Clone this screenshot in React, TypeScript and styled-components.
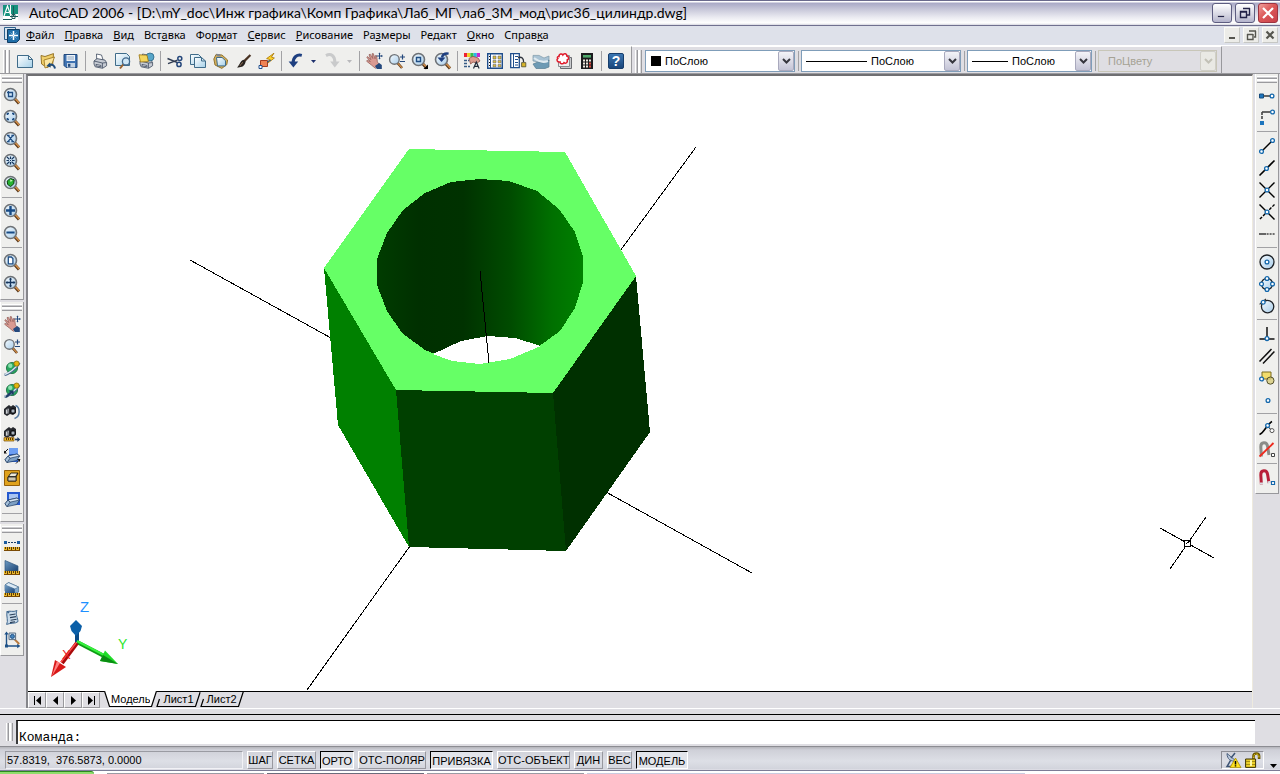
import React from "react";
import styled, { createGlobalStyle, css } from "styled-components";

const GlobalStyle = createGlobalStyle`
  * { box-sizing: border-box; }
  html, body { margin: 0; padding: 0; }
  body { font-family: "Liberation Sans", Arial, sans-serif; font-size: 11px; color: #000; background: #dfdee3; }
  button, select, input { font: inherit; color: inherit; margin: 0; padding: 0; border: 0; background: none; border-radius: 0; }
  svg { display: block; flex: none; }
`;

/* ---------- icons ---------- */

const Ruler = () => (
  <g>
    <path d="M0 11h16v4H0z" fill="#e9b82a" />
    <path d="M0 14.5h16" stroke="#7a4a05" />
    <path d="M1.5 11v2M3.5 11v3M5.5 11v2M7.5 11v3M9.5 11v2M11.5 11v3M13.5 11v2M15.5 11v3" stroke="#5c3a08" />
  </g>
);

const Lens = ({ children }: { children?: React.ReactNode }) => (
  <g>
    <path d="M10.5 10.5L15 15.5" stroke="#5b3a1c" strokeWidth="3" />
    <path d="M11 10.6L15.2 15" stroke="#d8924a" strokeWidth="1.4" />
    <circle cx="6.5" cy="6.5" r="6" fill="url(#glass)" stroke="#6e7276" strokeWidth="1.6" />
    {children}
  </g>
);

const Node = ({ x, y }: { x: number; y: number }) => (
  <circle cx={x} cy={y} r="1.9" fill="#fff" stroke="#1468ac" strokeWidth="1.3" />
);

const Hand = () => (
  <g>
    <path d="M.8 4.2l1-.6 3 3L3 1.7l1.2-.5 2.6 4.3L6 .8l1.3-.2 1.8 5.2.3-3.3 1.2.2.8 6.2 2 2.8-4 3.6-4-3.3L.6 8.2l.7-1 3 1.5z" fill="#d99a92" stroke="#8d5650" strokeWidth=".7" />
    <path d="M9 13l4.2-3 2.6 2v4h-5z" fill="#24487c" />
    <path d="M13.5 0v6M10.5 3h6" stroke="#24487c" />
    <path d="M13.5-.6l1.2 1.4h-2.4zM13.5 6.6l1.2-1.4h-2.4zM16.6 3l-1.4-1.2v2.4z" fill="#24487c" />
  </g>
);

const Printer = () => (
  <g stroke="#3e4a5e" strokeWidth=".8">
    <path d="M4.5 1l5 1 1.6 5-6.4-.6z" fill="#fff" />
    <path d="M2 8l3-2.4 8 1.5 1.6 2.6v3l-4 2.6-7.4-1.5L2 11z" fill="#c6cbd3" />
    <path d="M2 8l8.4 2 4-.4M10.4 10v5" fill="none" />
    <path d="M4 11.4l5 1.1v1.3l-5-1z" fill="#fff" />
  </g>
);

const Planet = () => (
  <g>
    <circle cx="8" cy="8" r="5.6" fill="#27a65e" stroke="#156a3d" strokeWidth=".8" />
    <circle cx="6.3" cy="5.8" r="2.2" fill="#8be0ad" />
    <path d="M.6 14.8C3 14.6 12.6 8.8 15.2 2.8" fill="none" stroke="#486a8c" strokeWidth="2.6" />
    <path d="M.9 14.4C4 13.6 12 8.8 14.8 3" fill="none" stroke="#dfeaf4" strokeWidth="1.2" />
    <circle cx="12.6" cy="3.6" r="2.6" fill="#e2b50e" stroke="#8d6c05" strokeWidth=".8" />
  </g>
);

const Camera = () => (
  <g>
    <path d="M0 5l3-2.6L5 1l2 1.6L9 1l3 2v6l-3 2-3-1-3 2-3-2z" fill="#25282d" />
    <circle cx="9" cy="7" r="2.6" fill="#5d646e" stroke="#0c0d0f" />
    <path d="M2.4 5.6v4.2M4.2 4.6l-.4 5" stroke="#d5d9de" strokeWidth="1.1" />
    <circle cx="9" cy="7" r="1" fill="#c3ccd6" />
  </g>
);

const Solid = () => (
  <g stroke="#1c3a5e" strokeWidth=".7">
    <path d="M4 8l9-2 2.6 2-3 4.6-9.6 2L1 11.8z" fill="#7da0c4" />
    <path d="M4 8l9-2 2.6 2-9.6 2.2z" fill="#d7e5f2" />
    <path d="M6 10.2l-3 4.4L1 11.8 4 8z" fill="#a7c1da" />
  </g>
);

const Magnet = ({ fill }: { fill: string }) => (
  <path d="M2.4 14.5L1.8 5C1.6-.4 7.8-.6 8.6 4.4L10 13" fill="none" stroke={fill} strokeWidth="3" />
);

const icons: Record<string, React.ReactNode> = {
  "new": <path d="M.5 2.5h11l4 4v8H.5zM11.5 2.5v4h4" fill="url(#sheet)" stroke="#3f6c8a" />,
  open: (
    <g>
      <path d="M1 2.5l4 1L13.5.6l-.8 11L7 14.6 1.6 11z" fill="#f0cf6a" stroke="#8c6a1c" strokeWidth=".9" />
      <path d="M4 7l10.5-3-3 8L5 15z" fill="#fbe6a2" stroke="#a07a22" strokeWidth=".9" />
      <path d="M15 15.5c-.5-3.5-3-4.6-6-3.6" fill="none" stroke="#1f4c7c" strokeWidth="2" />
      <path d="M6.4 13l3.6-3.6.8 5z" fill="#1f4c7c" />
    </g>
  ),
  save: (
    <g>
      <path d="M1 1.5h13v13H3l-2-2z" fill="#3f73b2" stroke="#234a7c" />
      <path d="M3.5 2h8.5v6H3.5z" fill="#eef3f8" />
      <path d="M4.5 4h6.5M4.5 6h6.5" stroke="#8ca6c2" />
      <path d="M4 10h8v4.5H4z" fill="#c3d3e4" />
      <path d="M5 10.8h2.4v3H5z" fill="#234a7c" />
    </g>
  ),
  print: <Printer />,
  preview: (
    <g>
      <path d="M.5.5h11l3 3v9H.5z" fill="url(#sheet)" stroke="#3f6c8a" />
      <path d="M8.5 11L5 15.5" stroke="#9a6230" strokeWidth="2" />
      <circle cx="11" cy="8.4" r="3.6" fill="#cfe6f5" stroke="#41688c" strokeWidth="1.3" />
    </g>
  ),
  publish: (
    <g>
      <Printer />
      <circle cx="12" cy="4" r="4" fill="#57a5c8" stroke="#2c6684" strokeWidth=".8" />
      <path d="M1 1.8l8 .4 1.4 6.4-8 .4z" fill="#f4d65c" stroke="#987312" strokeWidth=".8" />
    </g>
  ),
  cut: (
    <g fill="none">
      <path d="M.5 5.5L10.5 9.6M1 10.6l9.5-3.4" stroke="#2f3b52" strokeWidth="1.4" />
      <circle cx="12.8" cy="5.6" r="2" stroke="#24467a" strokeWidth="1.5" />
      <circle cx="12" cy="11.4" r="2.1" stroke="#24467a" strokeWidth="1.5" />
    </g>
  ),
  copy: (
    <g fill="url(#sheet)" stroke="#3f6c8a">
      <path d="M.5 1.5h8l3 3v7H.5z" />
      <path d="M4.5 4.5h7l4 3.5v6.5h-11z" />
      <path d="M11.5 4.5V8h4" fill="none" />
    </g>
  ),
  paste: (
    <g>
      <path d="M3 1.5L9 2l5.6 5-.8 4.6-5 3.8L2 12 .8 6z" fill="#d5b05c" stroke="#8a6b24" strokeWidth=".9" />
      <path d="M3.2.8l4 .4.6 2.2-4-.2z" fill="#80868e" />
      <path d="M3.5 4.5h5.6l3.4 3.2v5.2H4.5z" fill="url(#sheet)" stroke="#3f6c8a" />
    </g>
  ),
  match: (
    <g>
      <path d="M14.4 2L8 8.4" stroke="#493222" strokeWidth="2.2" />
      <path d="M9.6 8.6L7.6 6.8C4 8 4 12 1 14.4c3.6.4 8-.6 8.6-5.8z" fill="#27221f" />
      <path d="M7 9.4c-1.5.8-2 2-3 3.4" stroke="#98765a" fill="none" />
    </g>
  ),
  blockedit: (
    <g>
      <path d="M15 .2L7.6 5.6l3 .8-2.4 4.2L15.4 5l-3-.8z" fill="#ffd428" stroke="#a87400" strokeWidth=".8" />
      <path d="M1.5 7.5h7v6h-7z" fill="#ef8354" stroke="#a33b1e" />
      <path d="M0 12.5h3v3H0z" fill="#fff" stroke="#204f8e" />
      <path d="M8 9l4-2" stroke="#204f8e" />
    </g>
  ),
  undo: (
    <g>
      <path d="M13.8 2.4C9 1.2 5 4 5.2 10" fill="none" stroke="#1e3f80" strokeWidth="3" />
      <path d="M.6 8.6h9.6L5.4 14.6z" fill="#1e3f80" />
    </g>
  ),
  redo: (
    <g>
      <path d="M2 2.6C7-.2 11 3 10.8 9.4" fill="none" stroke="#c9cacb" strokeWidth="3" />
      <path d="M6.2 8.6h9.4l-4.8 6z" fill="#c9cacb" />
    </g>
  ),
  pan: <Hand />,
  realtime: (
    <g>
      <path d="M8.6 10L13 15" stroke="#5b3a1c" strokeWidth="2.6" />
      <path d="M9 10.4l4 4.4" stroke="#d8924a" strokeWidth="1.2" />
      <circle cx="5.4" cy="6.4" r="4.8" fill="url(#glass)" stroke="#6e7276" strokeWidth="1.4" />
      <path d="M13.5 1.5v5M11 4h5M11 8.5h5" stroke="#24487c" strokeWidth="1.2" />
    </g>
  ),
  zoomwin: (
    <Lens>
      <path d="M4.5 4.5h4v4h-4zM3 4.5h6M4.5 3v6" fill="none" stroke="#1f4e84" strokeWidth="1.3" />
    </Lens>
  ),
  zoomflyout: (
    <g>
      <Lens>
        <path d="M4.5 4.5h4v4h-4z" fill="none" stroke="#1f4e84" strokeWidth="1.4" />
      </Lens>
      <path d="M16 11.5V16h-4.5z" fill="#000" />
    </g>
  ),
  zoomprev: (
    <Lens>
      <path d="M13.6.6c-4-.6-6 1-6.6 4" fill="none" stroke="#1e3f80" strokeWidth="2.4" />
      <path d="M2.4 4.4h8L6.6 9z" fill="#1e3f80" />
    </Lens>
  ),
  props: (
    <g>
      <path d="M0 0h3.2v4H0z" fill="#e23" />
      <path d="M3.2 0h3.2v4H3.2z" fill="#f0d020" />
      <path d="M6.4 0h3.2v4H6.4z" fill="#35c04a" />
      <path d="M9.6 0h3.2v4H9.6z" fill="#2ab8e8" />
      <path d="M12.8 0H16v4h-3.2z" fill="#c52bd0" />
      <path d="M5 5.4l4-2 5 1.6 2 3-3 2-4-1-2.4 2z" fill="#dd9d90" stroke="#8d4f44" strokeWidth=".8" />
      <path d="M0 7.5h5M0 10.5h4M0 13.5h6" stroke="#375c86" strokeWidth="1.4" strokeDasharray="3 1" />
      <path d="M9.5 15.5l2.8-6.4 2.8 6.4M10.6 13.4h3.4" fill="none" stroke="#222b3a" strokeWidth="1.2" />
    </g>
  ),
  design: (
    <g>
      <path d="M.7.7h14.6v14.6H.7z" fill="#fff" stroke="#1f4e8c" strokeWidth="1.4" />
      <path d="M3.5 1v14" stroke="#1f4e8c" />
      <path d="M6 3h3v3H6zM11 3h3v3h-3zM6 7.4h3v2.4H6zM11 7.4h3v2.4h-3zM6 11.4h3v2.4H6zM11 11.4h3v2.4h-3z" fill="#dcbd3c" stroke="#49506a" strokeWidth=".5" />
      <path d="M2 3.5h1M2 6.5h1M2 9.5h1M2 12.5h1" stroke="#111" />
    </g>
  ),
  palettes: (
    <g>
      <path d="M.7.7h8.6v14H.7z" fill="#fff" stroke="#1f4e8c" strokeWidth="1.3" />
      <path d="M3.5 1v13M5 3.5h3M5 6.5h3M5 9.5h3M5 12h3" stroke="#1f4e8c" />
      <path d="M8 4.5c4-1 5.6 1 5.6 4.6" fill="none" stroke="#30353e" strokeWidth="1.3" />
      <path d="M11.6 9.6h4.2v4.2h-4.2z" fill="#d9b52a" stroke="#4c4b30" strokeWidth=".8" />
    </g>
  ),
  sheetset: (
    <g>
      <path d="M0 2.4h6L11 5l5-2v5l-4 3-6-2-6-1z" fill="#a9c3d4" stroke="#7d98a8" strokeWidth=".7" />
      <path d="M0 11l5-2 5 1 6-3v7l-4 1.5H3z" fill="#6d9ab4" stroke="#587c91" strokeWidth=".7" />
      <path d="M1 5c5 4 9 5 14 3" stroke="#dfeaf0" strokeWidth="2" fill="none" />
    </g>
  ),
  markup: (
    <g>
      <path d="M4.5 4.5h11v11h-11z" fill="#c9cbcd" stroke="#6a6c70" />
      <path d="M2.5 2.5h11v11h-11z" fill="#eee" stroke="#8a8c90" />
      <path d="M3 3.6C3 .6 6 .4 6.8 2 8 0 11 .6 10.8 3c2.4.4 2.2 3.4.4 4 .8 2.4-1.6 4-3.2 2.6C6.8 11.6 4 11 4 9 1.4 9.6 0 6.8 1.8 5.6.8 4.6 1.6 3.4 3 3.6z" fill="#fff" stroke="#e01c2c" strokeWidth="1.5" />
    </g>
  ),
  calc: (
    <g>
      <path d="M2 0h12v16H2z" fill="#1c1c1e" />
      <path d="M4 2h8v2.6H4z" fill="#4fa86a" />
      <path d="M4 6.5h2v2H4zM7 6.5h2v2H7zM10 6.5h2v2h-2zM4 9.5h2v2H4zM7 9.5h2v2H7zM4 12.5h2v2H4zM7 12.5h2v2H7z" fill="#f0e9df" />
      <path d="M10 9.5h2v2h-2zM10 12.5h2v2h-2z" fill="#e05044" />
    </g>
  ),
  help: (
    <g>
      <rect x=".5" y=".5" width="15" height="15" rx="1.5" fill="url(#helpBlue)" stroke="#173e6c" />
      <text x="8" y="13" textAnchor="middle" fontFamily="Liberation Sans, sans-serif" fontWeight="700" fontSize="14" fill="#fff">?</text>
    </g>
  ),
  zoomdyn: (
    <Lens>
      <path d="M3.4 5V3.6H5M8 3.6h1.6V5M9.6 8v1.6H8M5 9.6H3.4V8" fill="none" stroke="#1f4e84" strokeWidth="1.5" />
    </Lens>
  ),
  zoomscale: (
    <Lens>
      <path d="M4 3.4l5 6.2M9 3.4L4 9.6M3 3.5h2.6M7.4 3.5H10M3 9.6h2.6M7.4 9.6H10" stroke="#1f4e84" strokeWidth="1.3" />
    </Lens>
  ),
  zoomcenter: (
    <Lens>
      <path d="M3 3l2.4 2.4M10 3L7.6 5.4M3 10l2.4-2.4M10 10L7.6 7.6M6.5 2.5v2.4M6.5 8v2.6M2.5 6.5h2.4M8 6.5h2.6" stroke="#16375f" strokeWidth="1.2" />
      <path d="M6 6h1v1H6z" fill="#16375f" />
    </Lens>
  ),
  zoomobj: (
    <Lens>
      <path d="M3.2 5l3.2-2.6 3.8 1.4-.4 4-3.2 2.8-3-2.2z" fill="#27b332" stroke="#0c3b10" strokeWidth="1" />
      <path d="M6 3.4l2.6 1-2 1.6z" fill="#d0f8c2" />
    </Lens>
  ),
  zoomin: (
    <Lens>
      <path d="M6.5 2v9M2 6.5h9" stroke="#174b86" strokeWidth="2.4" />
    </Lens>
  ),
  zoomout: (
    <Lens>
      <path d="M2.4 6.5h8.2" stroke="#174b86" strokeWidth="2" />
    </Lens>
  ),
  zoomall: (
    <Lens>
      <path d="M4.3 3h3l1.6 1.6v5.2H4.3z" fill="#fff" stroke="#1f4e84" strokeWidth="1.3" />
    </Lens>
  ),
  zoomext: (
    <Lens>
      <path d="M6.5 2.4v8.2M2.4 6.5h8.2" stroke="#16375f" strokeWidth="1.3" />
      <path d="M6.5 1.4l1.6 2H4.9zM6.5 11.6l1.6-2H4.9zM1.4 6.5l2-1.6v3.2zM11.6 6.5l-2-1.6v3.2z" fill="#16375f" />
    </Lens>
  ),
  orbit: <Planet />,
  corbit: (
    <g>
      <Planet />
      <path d="M2 15l5-4.6" stroke="#1d3b66" strokeWidth="2" />
      <path d="M4.6 8.4h5v5z" fill="#1d3b66" />
    </g>
  ),
  swivel: (
    <g>
      <Camera />
      <path d="M11.5 1.5c5 2 5 11-1 13" fill="none" stroke="#53789f" strokeWidth="1.5" />
    </g>
  ),
  distance: (
    <g>
      <Camera />
      <path d="M0 11.6h10V15H0z" fill="#e9b82a" stroke="#7a4a05" strokeWidth=".7" />
      <path d="M2.5 12v2M4.5 12v2M6.5 12v2M8.5 12v2" stroke="#5c3a08" />
      <path d="M11 13.5h3" stroke="#1d3b66" strokeWidth="1.6" />
      <path d="M13.4 11l2.8 2.5-2.8 2.5z" fill="#1d3b66" />
    </g>
  ),
  clip: (
    <g>
      <path d="M5 0h9v14H5z" fill="#2b63d8" />
      <path d="M5 0h9v6H5z" fill="#6c9ef2" />
      <Solid />
      <path d="M0 5l4-4M12 15.5l4-4" stroke="#111" />
      <path d="M0 2.4v3h3zM16 14v-3h-3z" fill="#111" />
    </g>
  ),
  clipfront: (
    <g>
      <path d="M.5.5h15v15H.5z" fill="#e0a21c" stroke="#94600a" />
      <path d="M4 7l3-4h7l-2 4v4H4z" fill="#3d3a34" stroke="#111" strokeWidth=".8" />
      <path d="M4 7h8v4H4z" fill="#cfc6ae" stroke="#222" strokeWidth=".8" />
      <path d="M7 3.6h6L11.4 6H5.4z" fill="#f0ead8" />
    </g>
  ),
  clipback: (
    <g>
      <path d="M3 0h13v13H3z" fill="#2559d0" />
      <path d="M5 2h9v7H5z" fill="#a9c6f2" />
      <Solid />
    </g>
  ),
  dist: (
    <g>
      <path d="M0 9h16v4H0z" fill="#e9b82a" />
      <path d="M0 12.5h16" stroke="#7a4a05" />
      <path d="M1.5 9v2M3.5 9v3M5.5 9v2M7.5 9v3M9.5 9v2M11.5 9v3M13.5 9v2M15.5 9v3" stroke="#5c3a08" />
      <path d="M0 3h3v3H0zM13 3h3v3h-3z" fill="#1a5ba0" />
      <path d="M4 4.5h8" stroke="#1a3d66" strokeWidth="1.2" strokeDasharray="2 1" />
    </g>
  ),
  area: (
    <g>
      <path d="M1 .5L14 6v5H1z" fill="url(#steel)" stroke="#31567c" strokeWidth=".7" />
      <Ruler />
    </g>
  ),
  mass: (
    <g>
      <path d="M1 3l3.6-2.4 10 4.4v5l-3.6 1.4L1 9z" fill="#7fa8cc" stroke="#41688c" strokeWidth=".7" />
      <path d="M1 3l3.6-2.4 10 4.4-3.8 2z" fill="#dceaf5" stroke="#41688c" strokeWidth=".6" />
      <path d="M1 3l9.8 4v4.4H1z" fill="url(#steel)" />
      <Ruler />
    </g>
  ),
  list: (
    <g>
      <path d="M3 1.6C6 .4 9 2.4 13 .6c-2 3 1 8 1 11-3 2.4-7 1-11.4 2.8C4.6 11 2 6 3 1.6z" fill="#c9dbea" stroke="#3f678f" />
      <path d="M2 1.6h4l-1.4 2z" fill="#3f678f" />
      <path d="M5.5 5l6-1M6 7.6l6-1M6.6 10.2l6-1M6 12.6l5-.8" stroke="#2a3f58" strokeWidth="1.1" />
    </g>
  ),
  locate: (
    <g>
      <path d="M2.5 14.5V1.5M1 14H14" stroke="#1f5288" strokeWidth="1.4" />
      <path d="M2.5-.6l2.2 3.2H.3zM16.4 14l-3.2 2.2v-4.4zM1 12.6h3v2.9H1z" fill="#1f5288" />
      <path d="M10.6 7.4l4.6 4.6" stroke="#b8783c" strokeWidth="2" />
      <path d="M5 1h6.6v6.6H5z" fill="#cfe2f2" stroke="#5c6f82" />
      <circle cx="8.4" cy="4.4" r="2" fill="#4384bd" stroke="#1f5288" />
    </g>
  ),
  track: (
    <g>
      <path d="M3 8h8" stroke="#444" strokeWidth="1.6" />
      <path d="M.5 6h4v4h-4z" fill="#1c74bc" stroke="#154c7e" />
      <Node x={13} y={8} />
    </g>
  ),
  from: (
    <g>
      <path d="M3 2h8" stroke="#444" strokeWidth="1.6" />
      <path d="M3 2v8" stroke="#444" strokeWidth="1.6" strokeDasharray="3 1" />
      <path d="M1 11h4v4H1z" fill="#1c74bc" />
      <Node x={13.5} y={2} />
    </g>
  ),
  endpoint: (
    <g>
      <path d="M3 13L13 3" stroke="#000" strokeWidth="1.4" />
      <Node x={2.5} y={13.5} />
      <Node x={13.5} y={2.5} />
    </g>
  ),
  midpoint: (
    <g>
      <path d="M.5 15.5l15-15" stroke="#000" strokeWidth="1.6" />
      <Node x={7.5} y={8.5} />
    </g>
  ),
  intersection: (
    <g>
      <path d="M.5.5l15 15M15.5.5l-15 15" stroke="#000" strokeWidth="1.4" />
      <Node x={8} y={8} />
    </g>
  ),
  apparent: (
    <g>
      <path d="M.5.5l15 15" stroke="#000" strokeWidth="1.4" />
      <path d="M15.5.5l-15 15" stroke="#000" strokeWidth="1.4" strokeDasharray="3 1.4" />
      <Node x={8} y={8} />
    </g>
  ),
  extension: (
    <g>
      <path d="M0 8h7" stroke="#444" strokeWidth="1.6" />
      <path d="M7.6 8H16" stroke="#444" strokeWidth="1.6" strokeDasharray="2 1" />
    </g>
  ),
  center: (
    <g>
      <circle cx="8" cy="8" r="7" fill="url(#glass)" stroke="#1d2126" strokeWidth="1.3" />
      <Node x={8} y={8} />
    </g>
  ),
  quadrant: (
    <g>
      <circle cx="8" cy="8" r="5.6" fill="url(#glass)" stroke="#1d2126" strokeWidth="1.3" />
      <Node x={8} y={2.5} />
      <Node x={8} y={13.5} />
      <Node x={2.5} y={8} />
      <Node x={13.5} y={8} />
    </g>
  ),
  tangent: (
    <g>
      <circle cx="8.6" cy="8.6" r="6.2" fill="url(#glass)" stroke="#1d2126" strokeWidth="1.3" />
      <path d="M.6 6.4L7 1" stroke="#333" strokeWidth="1.2" />
      <Node x={4.2} y={4.2} />
    </g>
  ),
  perpendicular: (
    <g>
      <path d="M8 1v11M.5 13h15" stroke="#111" strokeWidth="1.5" />
      <Node x={8} y={12.6} />
    </g>
  ),
  parallel: <path d="M.5 13.5l12-12.4M4 15.4L15.4 3.6" stroke="#111" strokeWidth="1.5" />,
  insert: (
    <g>
      <path d="M3 2h9v7H3z" fill="#f2dc6c" stroke="#7a6a1e" />
      <circle cx="11.4" cy="10.6" r="3.6" fill="#d8cd7c" fillOpacity=".8" stroke="#53502c" />
      <Node x={2.6} y={9} />
    </g>
  ),
  node: <Node x={9} y={8.5} />,
  nearest: (
    <g>
      <path d="M.5 14.5C5 13 8 4 13 1.5" fill="none" stroke="#000" strokeWidth="1.6" />
      <path d="M9.4 7l3 3" stroke="#000" />
      <Node x={8.6} y={5.6} />
      <circle cx="13" cy="10.6" r="2" fill="#fff" stroke="#555" />
    </g>
  ),
  none: (
    <g>
      <Magnet fill="#8b8c88" />
      <path d="M12.5 11.5h3v3h-3z" fill="#fff" stroke="#444" />
      <path d="M.5 14.5L14.5 1" stroke="#ee2a1e" strokeWidth="1.8" />
    </g>
  ),
  osnap: (
    <g>
      <Magnet fill="#b81f38" />
      <path d="M1 13.6l3-.2M8.6 12.4l3-.6" stroke="#d8dde2" strokeWidth="2" />
      <path d="M12.5 11.5h3v3h-3z" fill="#fff" stroke="#1468ac" strokeWidth="1.2" />
    </g>
  ),
  satellite: (
    <g>
      <path d="M2 1.5C2 7 6 10 11 9z" fill="#b9c7da" stroke="#3d5474" strokeWidth=".9" />
      <path d="M6 6l4-5M5.6 8.4L2 14.6h5" fill="none" stroke="#3d5474" strokeWidth="1.5" />
      <path d="M10.5 6L16 15.6H5z" fill="#ffe21c" stroke="#a48a00" strokeWidth=".8" />
      <path d="M10.5 9v3.4M10.5 13.2v1.4" stroke="#000" strokeWidth="1.5" />
    </g>
  ),
  lock: (
    <g>
      <path d="M8.5 7.5V4c0-3.4 5.6-3.4 5.6 0v3" fill="none" stroke="#6a5600" strokeWidth="2.6" />
      <path d="M8.7 6.5V4c0-2.6 5.2-2.6 5.2 0v2" fill="none" stroke="#f2d61e" strokeWidth="1" strokeDasharray="2 1" />
      <path d="M.6 7h10v8.4H.6z" fill="#ecd02a" stroke="#3c3200" />
      <path d="M1 9.5h9M1 12.5h9" stroke="#a58f12" />
      <path d="M5 8h2v6H5z" fill="#fff9a8" />
    </g>
  ),
};

const Icon = ({ name }: { name: string }) => (
  <svg width="16" height="16" viewBox="0 0 16 16" overflow="visible" aria-hidden="true">
    {icons[name]}
  </svg>
);

const Gradients = styled.svg`
  position: absolute;
`;

const SharedGradients = () => (
  <Gradients width="0" height="0" aria-hidden="true">
    <defs>
      <linearGradient id="glass" x1="0" y1="0" x2="1" y2="1">
        <stop offset="0" stopColor="#f4fafe" />
        <stop offset="1" stopColor="#a9cdea" />
      </linearGradient>
      <linearGradient id="sheet" x1="0" y1="0" x2="1" y2="1">
        <stop offset="0" stopColor="#ffffff" />
        <stop offset="1" stopColor="#a5d0e8" />
      </linearGradient>
      <linearGradient id="steel" x1="0" y1="0" x2="1" y2="1">
        <stop offset="0" stopColor="#6f9cc4" />
        <stop offset="1" stopColor="#1c4474" />
      </linearGradient>
      <linearGradient id="helpBlue" x1="0" y1="0" x2="0" y2="1">
        <stop offset="0" stopColor="#3d78b4" />
        <stop offset="1" stopColor="#194579" />
      </linearGradient>
      <linearGradient id="bore" x1="0" y1="0" x2="1" y2="0">
        <stop offset="0" stopColor="#003c00" />
        <stop offset=".2" stopColor="#003000" />
        <stop offset=".42" stopColor="#003200" />
        <stop offset=".65" stopColor="#004c00" />
        <stop offset=".85" stopColor="#007000" />
        <stop offset="1" stopColor="#008000" />
      </linearGradient>
    </defs>
  </Gradients>
);

/* ---------- window frame ---------- */

const Window = styled.div`
  display: flex;
  flex-direction: column;
  height: 100vh;
  overflow: hidden;
  background: #dfdee3;
`;

const TitleBar = styled.header`
  flex: none;
  display: flex;
  align-items: center;
  height: 26px;
  padding: 0 2px 0 3px;
  border-top: 1px solid #6a6a8c;
  border-bottom: 1px solid #70708f;
  background: linear-gradient(#fff 0, #fff 1px, #a9a9c6 2px, #c6c6d8 8px, #e9e9f0 16px, #fff 22px, #d6d6e0 24px);
`;

const Title = styled.h1`
  flex: 1;
  margin: 0 0 0 11px;
  font: 400 14px/22px Lato, "Open Sans", sans-serif;
  white-space: nowrap;
`;

const WindowButtons = styled.div`
  display: flex;
  gap: 3px;
`;

const WindowButton = styled.button<{ $close?: boolean }>`
  display: grid;
  place-items: center;
  width: 20px;
  height: 20px;
  border: 1px solid ${(p) => (p.$close ? "#9c3440" : "#5d5d80")};
  border-radius: 3px;
  background: ${(p) =>
    p.$close ? "linear-gradient(135deg, #f0a09c, #dc5858 45%, #c8404a)" : "linear-gradient(#fff, #d5d5e2 60%, #b4b4cc)"};
`;

const MenuBar = styled.nav`
  flex: none;
  display: flex;
  align-items: center;
  height: 20px;
  padding: 0 2px 2px 4px;
  border-bottom: 1px solid #fff;
  background: #dee1ea;
`;

const Menus = styled.div`
  flex: 1;
  display: flex;
  gap: 10px;
  margin-left: 6px;
`;

const MenuItem = styled.button`
  font: 11px/16px "Noto Sans", "Open Sans", sans-serif;
  white-space: nowrap;
`;

const DocButton = styled.button`
  display: grid;
  place-items: center;
  width: 16px;
  height: 16px;
  border: 1px solid #fafaf6;
  border-right-color: #c6c7c4;
  border-bottom-color: #c6c7c4;
  background: #ecece8;
`;

/* ---------- toolbars ---------- */

const TopDock = styled.div`
  flex: none;
  display: flex;
  height: 28px;
  border-bottom: 1px solid #9a9a9e;
`;

const TopToolbar = styled.div<{ $plain?: boolean }>`
  display: flex;
  align-items: center;
  padding: 2px 4px 0 3px;
  border-top: 1px solid #fff;
  border-right: 1px solid #98989c;
  background: ${(p) => (p.$plain ? "#dfdee3" : "#efefed")};
`;

const Grip = styled.span<{ $side?: boolean }>`
  flex: none;
  ${(p) =>
    p.$side
      ? css`
          width: 20px;
          height: 7px;
          margin: 2px 0;
          border-top: 1px solid #fff;
          border-bottom: 1px solid #9a9a9e;
          background: linear-gradient(#c9c9cc 0 1px, #9a9a9e 1px 2px, #fff 2px 4px, #dcdcde 4px);
        `
      : css`
          width: 7px;
          height: 23px;
          margin-right: 3px;
          border-left: 1px solid #fff;
          border-right: 1px solid #9a9a9e;
          background: linear-gradient(90deg, #c9c9cc 0 1px, #9a9a9e 1px 2px, #fff 2px 4px, #dcdcde 4px);
        `}
`;

const ToolButton = styled.button<{ $side?: boolean; $narrow?: boolean }>`
  flex: none;
  display: grid;
  place-items: center;
  width: ${(p) => (p.$narrow ? 13 : p.$side ? 22 : 23)}px;
  height: 22px;
`;

const Separator = styled.span<{ $side?: boolean }>`
  flex: none;
  width: ${(p) => (p.$side ? "20px" : "1px")};
  height: ${(p) => (p.$side ? "1px" : "20px")};
  margin: ${(p) => (p.$side ? "2px 0 3px" : "0 2px 0 3px")};
  background: #a2a2a5;
`;

const SideDock = styled.aside`
  flex: none;
  display: flex;
  flex-direction: column;
  gap: 2px;
  width: 26px;
  padding-right: 2px;
`;

const RightDock = styled(SideDock)`
  width: 27px;
  padding-right: 1px;
  padding-left: 2px;
`;

const SideToolbar = styled.div`
  display: flex;
  flex-direction: column;
  align-items: center;
  padding-bottom: 4px;
  border-right: 1px solid #98989c;
  border-bottom: 1px solid #98989c;
  border-left: 1px solid #fff;
  background: #efefed;
`;

/* ---------- combo boxes ---------- */

const Combo = styled.label<{ $width: number; $off?: boolean }>`
  display: flex;
  align-items: center;
  width: ${(p) => p.$width}px;
  height: 22px;
  padding-left: ${(p) => (p.$off ? 5 : 4)}px;
  border: 1px solid ${(p) => (p.$off ? "#c8c6b8" : "#7f9db9")};
  background: ${(p) => (p.$off ? "#dfdee3" : "#fff")};
  color: ${(p) => (p.$off ? "#a5a294" : "#000")};
`;

const ComboSelect = styled.select`
  flex: 1;
  min-width: 0;
  padding-left: 4px;
  appearance: none;
  font-size: 11px;
  opacity: 1;
  outline: none;
`;

const ComboArrow = styled.span<{ $off?: boolean }>`
  display: grid;
  place-items: center;
  width: 16px;
  height: 20px;
  border: 1px solid ${(p) => (p.$off ? "#d0cfc8" : "#a9a9bd")};
  border-radius: 2px;
  background: ${(p) => (p.$off ? "#e9e9e4" : "linear-gradient(#f4f4f8, #c4c4d6)")};
`;

const Swatch = styled.span`
  width: 10px;
  height: 10px;
  margin-left: 1px;
  background: #000;
`;

const LineSample = styled.span<{ $width: number }>`
  width: ${(p) => p.$width}px;
  height: 1px;
  background: #000;
`;

/* ---------- drawing area ---------- */

const Workspace = styled.main`
  flex: 1;
  display: flex;
  min-height: 0;
  border-bottom: 1px solid #fff;
`;

const DrawingPane = styled.section`
  flex: 1;
  min-width: 0;
  display: flex;
  flex-direction: column;
  border-top: 2px solid #6f6f72;
  border-left: 2px solid #85858a;
  border-right: 1px solid #eeeade;
`;

const Canvas = styled.div`
  flex: 1;
  min-height: 0;
  overflow: hidden;
  background: #fff;
`;

const TabStrip = styled.div`
  flex: none;
  display: flex;
  height: 17px;
  background: linear-gradient(#000 0 1px, #dfdee3 1px);
`;

const TabScroll = styled.button`
  display: grid;
  place-items: center;
  width: 18px;
  height: 16px;
  margin-top: 1px;
  border: 1px solid #fff;
  border-right-color: #98989c;
  border-bottom-color: #98989c;
`;

const Tab = styled.button<{ $active?: boolean }>`
  display: flex;
  height: 16px;
  position: relative;
  z-index: ${(p) => (p.$active ? 1 : 0)};
  margin-left: ${(p) => (p.$active ? 4 : -1)}px;
`;

const TabText = styled.span<{ $active?: boolean }>`
  height: 16px;
  border-bottom: 1px solid #000;
  border-top: 1px solid ${(p) => (p.$active ? "#fff" : "#000")};
  background: ${(p) => (p.$active ? "#fff" : "#dfdee3")};
  font-size: 11px;
  line-height: 15px;
`;

const SheetTab = ({ active, children }: { active?: boolean; children: string }) => {
  const fill = active ? "#fff" : "#dfdee3";
  return (
    <Tab $active={active} role="tab" aria-selected={!!active}>
      <svg width="7" height="16">
        <path d="M0 0l6 16h1V0z" fill={fill} />
        {!active && <path d="M0 .5h7" stroke="#000" />}
        <path d={active ? "M.5 0l5 15.5H7" : "M3.5 8L1 15.5H7"} fill="none" stroke="#000" strokeWidth="1.2" />
      </svg>
      <TabText $active={active}>{children}</TabText>
      <svg width="7" height="16">
        <path d="M7 0L1 16H0V0z" fill={fill} />
        {!active && <path d="M0 .5h7" stroke="#000" />}
        <path d="M6.5 0l-5 15.5H0" fill="none" stroke="#000" strokeWidth="1.2" />
      </svg>
    </Tab>
  );
};

/* ---------- command line and status bar ---------- */

const CommandDock = styled.section`
  flex: none;
  height: 37px;
  padding-top: 5px;
  background: #dfdee3;
`;

const CommandRow = styled.div`
  display: flex;
  align-items: stretch;
  height: 31px;
  padding: 5px 25px 1px 6px;
  border-top: 1px solid #000;
`;

const CommandGrip = styled(Grip)`
  height: 18px;
  margin: 3px 3px 0 0;
`;

const CommandBox = styled.label`
  flex: 1;
  display: flex;
  align-items: flex-end;
  padding-left: 1px;
  border-top: 1px solid #000;
  border-left: 2px solid #3a3a3c;
  background: #fff;
  font: 13px/12px "Liberation Mono", "Courier New", monospace;
`;

const CommandInput = styled.input`
  flex: 1;
  height: 12px;
  outline: none;
`;

const StatusBar = styled.footer`
  flex: none;
  display: flex;
  align-items: center;
  gap: 4px;
  height: 24px;
  padding: 4px 2px 0 5px;
  border-top: 1px solid #8c8c92;
  border-bottom: 1px solid #dcdce4;
  background: linear-gradient(#b4b4ba 0, #cfd0d8 3px, #dddfe6 14px, #d2d4dc);
  font-size: 11px;
  line-height: 17px;
`;

const Coordinates = styled.output`
  width: 238px;
  height: 18px;
  padding-left: 1px;
  border: 1px solid #9a9ba2;
  border-right-color: #f2f2f6;
  border-bottom-color: #f2f2f6;
  white-space: pre;
`;

const Toggle = styled.button<{ $on: boolean; $width: number }>`
  width: ${(p) => p.$width}px;
  height: 18px;
  padding-top: ${(p) => (p.$on ? 1 : 0)}px;
  border: 1px solid;
  border-color: ${(p) => (p.$on ? "#000 #fff #fff #000" : "#fff #98989f #98989f #fff")};
  background: ${(p) => (p.$on ? "#e2e4ea" : "transparent")};
  line-height: 16px;
  white-space: nowrap;
`;

const Spring = styled.span`
  flex: 1;
`;

const Tray = styled.div`
  display: flex;
  align-items: center;
  gap: 4px;
  width: 43px;
  height: 18px;
  padding-left: 3px;
  border: 1px solid #8c8d94;
  border-right-color: #fff;
  border-bottom-color: #fff;
`;

const TrayArrow = styled.button`
  width: 10px;
  height: 18px;
  padding: 11px 0 0 2px;
`;

const TaskEdge = styled.div`
  flex: none;
  display: flex;
  height: 4px;
  border-top: 1px solid #7c7c96;
  background: #fff;
`;

const StartEdge = styled.span`
  width: 94px;
  margin-right: 13px;
  border-top: 1px solid #2c8a1e;
  border-radius: 0 3px 0 0;
  background: #8fdc6c;
`;

const TaskButtonEdge = styled.span<{ $shade: string; $width: number }>`
  width: ${(p) => p.$width}px;
  height: 1px;
  margin: 2px 3px 0 0;
  background: ${(p) => p.$shade};
`;

const label: Record<string, string> = {
  "new": "Создать", open: "Открыть", save: "Сохранить", print: "Печать", cut: "Вырезать", copy: "Копировать", help: "Справка",
};

const Tools = ({ items, side }: { items: string[]; side?: boolean }) => (
  <>
    {items.map((name, i) =>
      name === "|" ? (
        <Separator key={i} $side={side} />
      ) : name === "v" || name === "V" ? (
        <ToolButton key={i} $narrow aria-label="Список">
          <svg width="5" height="3">
            <path d="M0 0h5L2.5 3z" fill={name === "v" ? "#1d2f6c" : "#b9b9bc"} />
          </svg>
        </ToolButton>
      ) : (
        <ToolButton key={i} $side={side} aria-label={label[name] ?? name}>
          <Icon name={name} />
        </ToolButton>
      )
    )}
  </>
);

const standardTools = "new open save | print preview publish | cut copy paste match blockedit | undo v redo V | pan realtime zoomflyout zoomprev | props design palettes sheetset markup calc | help".split(" ");
const zoomTools = "zoomwin zoomdyn zoomscale zoomcenter zoomobj | zoomin zoomout | zoomall zoomext".split(" ");
const orbitTools = "pan realtime orbit corbit swivel distance clip clipfront clipback |".split(" ");
const inquiryTools = "dist area mass | list locate".split(" ");
const snapTools = "track from | endpoint midpoint intersection apparent extension | center quadrant tangent | perpendicular parallel insert node | nearest none | osnap".split(" ");

/* Each entry: text before the access key, the key, text after it. */
const menus = [
  ["", "Ф", "айл"], ["", "П", "равка"], ["", "В", "ид"], ["Вст", "а", "вка"], ["Фор", "м", "ат"], ["", "С", "ервис"],
  ["", "Р", "исование"], ["Ра", "з", "меры"], ["Ре", "д", "акт"], ["", "О", "кно"], ["Справ", "к", "а"],
];

const toggles: [string, number, boolean][] = [
  ["ШАГ", 26, false], ["СЕТКА", 39, false], ["ОРТО", 34, true], ["ОТС-ПОЛЯР", 68, false], ["ПРИВЯЗКА", 63, true],
  ["ОТС-ОБЪЕКТ", 73, false], ["ДИН", 29, false], ["ВЕС", 25, false], ["МОДЕЛЬ", 52, true],
];

const PropertyCombo = ({ name, width, text, off, children }: { name: string; width: number; text: string; off?: boolean; children?: React.ReactNode }) => (
  <Combo $width={width} $off={off}>
    {children}
    <ComboSelect aria-label={name} disabled={off}>
      <option>{text}</option>
    </ComboSelect>
    <ComboArrow $off={off}>
      <svg width="9" height="6">
        <path d="M1 1l3.5 3.5L8 1" fill="none" stroke={off ? "#c2c1b6" : "#36363e"} strokeWidth="2" />
      </svg>
    </ComboArrow>
  </Combo>
);

const Scene = () => (
  <svg width="100%" height="100%" role="img" aria-label="Шестигранная призма с отверстием">
    <g transform="translate(-28 -76)" shapeRendering="crispEdges">
      <path d="M190 260L331 338M606 492L752 573M696 147L620 251M410 546L307 690" stroke="#000" />
      <path d="M324 268L396 390L409 547L338 425z" fill="#008000" />
      <path d="M396 390L553 393L566 551L409 547z" fill="#004000" />
      <path d="M553 393L636 276L650 432L566 551z" fill="#003000" />
      <path d="M409 149L565 152L636 276L553 393L396 390L324 268z" fill="#66ff66" />
      <path d="M480 179L509 181L537 191L559 209L575 232L583 257L583 282L575 308L560 331L538 347L510 359L480 364L452 361L425 350L402 333L387 311L377 285L377 259L387 233L403 210L425 193L451 182z" fill="url(#bore)" />
      <path d="M433 354L461 341L488 336L515 338L541 346L510 359L480 364L452 361z" fill="#fff" />
      <path d="M480 271L489 363" stroke="#000" />
      <path d="M1160 528L1214 558M1206 517L1170 569" stroke="#000" />
      <path d="M1184.5 540.5h6v6h-6z" fill="#fff" stroke="#000" />
      <path d="M1186 544L1190 541" stroke="#000" />
    </g>
    <g transform="translate(-28 -76)">
      <path d="M77 642V628" stroke="#0a4a86" strokeWidth="4" />
      <path d="M76 620l6 6-1.5 5L76 636l-4.500-5L70 626z" fill="#0b5fa8" />
      <path d="M77 642L104 656" stroke="#0d9c14" strokeWidth="4" />
      <path d="M77 641L104 655" stroke="#35f03c" strokeWidth="2" />
      <path d="M105 650.5L118 664L100 661z" fill="#1fdc28" />
      <path d="M100 661l3-6 15 9z" fill="#0a8c12" />
      <path d="M77 643L62 663" stroke="#a80a0a" strokeWidth="4" />
      <path d="M76 643L61 662" stroke="#ff4a4a" strokeWidth="1.5" />
      <path d="M55 660L66 667L51 677z" fill="#d81818" />
      <path d="M57 661l3 2-8 13z" fill="#ff8080" />
      <text x="80" y="612" fontSize="15" fill="#1e90ff" fontFamily="Liberation Sans, sans-serif">Z</text>
      <text x="118" y="649" fontSize="14" fill="#2ce62c" fontFamily="Liberation Sans, sans-serif">Y</text>
      <text x="62" y="659" fontSize="13" fill="#e81c1c" fontFamily="Liberation Sans, sans-serif">X</text>
    </g>
  </svg>
);

export default function App() {
  return (
    <Window>
      <GlobalStyle />
      <SharedGradients />

      <TitleBar>
        <svg width="15" height="16" viewBox="0 0 15 16" aria-hidden="true">
          <path d="M0 0h15v16H0z" fill="#fff" />
          <path d="M0 0h7v11H0zM8 0h7v9H8z" fill="#16917d" />
          <path d="M1 11L4.5 1 8 11M3 7.5h3" fill="none" stroke="#fff" strokeWidth="1.2" />
          <path d="M10.5 1v11M7 11.5h8M9 9.5h3v4H9zM0 14.5h9" fill="none" stroke="#1d5b5a" />
        </svg>
        <Title>AutoCAD 2006 - [D:\mY_doc\Инж графика\Комп Графика\Лаб_МГ\лаб_3М_мод\рис3б_цилиндр.dwg]</Title>
        <WindowButtons>
          <WindowButton aria-label="Свернуть">
            <svg width="16" height="16"><path d="M3.5 10.5h7v2h-7z" fill="#222248" stroke="#fff" strokeWidth=".5" /></svg>
          </WindowButton>
          <WindowButton aria-label="Восстановить">
            <svg width="16" height="16"><path d="M6 3.5h7M12.5 3v7H10M3 7h7M3.5 6.5v6h6v-6z" fill="none" stroke="#222248" strokeWidth="1.4" /></svg>
          </WindowButton>
          <WindowButton $close aria-label="Закрыть">
            <svg width="16" height="16"><path d="M3 3l10 10M13 3L3 13" stroke="#fff" strokeWidth="2.2" /></svg>
          </WindowButton>
        </WindowButtons>
      </TitleBar>

      <MenuBar>
        <svg width="16" height="16" viewBox="0 0 16 16" aria-hidden="true">
          <path d="M.5.5h11v3h-8v9h-3z" fill="#d5e2ee" stroke="#2b5f8c" />
          <path d="M3.5 2.5h12v10l-3 3h-9z" fill="#1f6ea8" stroke="#123d63" />
          <path d="M9.5 4v9M5 8.5h9" stroke="#fff" strokeWidth="1.5" />
          <path d="M6.5 5.5l6 6M12.5 5.5l-6 6" stroke="#8cc4e8" strokeWidth=".7" />
        </svg>
        <Menus>
          {menus.map(([before, key, after]) => (
            <MenuItem key={before + key + after}>
              {before}<u>{key}</u>{after}
            </MenuItem>
          ))}
        </Menus>
        <WindowButtons>
          <DocButton aria-label="Свернуть документ">
            <svg width="12" height="12"><path d="M3 9h6" stroke="#55554e" strokeWidth="2" /></svg>
          </DocButton>
          <DocButton aria-label="Восстановить документ">
            <svg width="12" height="12"><path d="M4 2h7M10.5 2v6H9M2 5.5h6M2.5 5v5.5h5.5V5" fill="none" stroke="#55554e" strokeWidth="1.4" /></svg>
          </DocButton>
          <DocButton aria-label="Закрыть документ">
            <svg width="12" height="12"><path d="M2.5 2.5l7 7M9.5 2.5l-7 7" stroke="#55554e" strokeWidth="2.2" /></svg>
          </DocButton>
        </WindowButtons>
      </MenuBar>

      <TopDock>
        <TopToolbar>
          <Grip />
          <Tools items={standardTools} />
        </TopToolbar>
        <TopToolbar $plain>
          <Grip />
          <PropertyCombo name="Цвет" width={150} text="ПоСлою"><Swatch /></PropertyCombo>
          <Separator />
          <PropertyCombo name="Тип линии" width={160} text="ПоСлою"><LineSample $width={61} /></PropertyCombo>
          <Separator />
          <PropertyCombo name="Вес линии" width={125} text="ПоСлою"><LineSample $width={36} /></PropertyCombo>
          <Separator />
          <PropertyCombo name="Стиль печати" width={119} text="ПоЦвету" off />
        </TopToolbar>
      </TopDock>

      <Workspace>
        <SideDock>
          <SideToolbar><Grip $side /><Tools items={zoomTools} side /></SideToolbar>
          <SideToolbar><Grip $side /><Tools items={orbitTools} side /></SideToolbar>
          <SideToolbar><Grip $side /><Tools items={inquiryTools} side /></SideToolbar>
        </SideDock>
        <DrawingPane>
          <Canvas><Scene /></Canvas>
          <TabStrip role="tablist">
            <TabScroll aria-label="Первый лист"><svg width="9" height="9"><path d="M1.5 0v9" stroke="#000" /><path d="M8 0v9L3 4.5z" /></svg></TabScroll>
            <TabScroll aria-label="Предыдущий лист"><svg width="9" height="9"><path d="M7 0v9L2 4.5z" /></svg></TabScroll>
            <TabScroll aria-label="Следующий лист"><svg width="9" height="9"><path d="M2 0v9l5-4.5z" /></svg></TabScroll>
            <TabScroll aria-label="Последний лист"><svg width="9" height="9"><path d="M7.5 0v9" stroke="#000" /><path d="M1 0v9l5-4.5z" /></svg></TabScroll>
            <SheetTab active>Модель</SheetTab>
            <SheetTab>Лист1</SheetTab>
            <SheetTab>Лист2</SheetTab>
          </TabStrip>
        </DrawingPane>
        <RightDock>
          <SideToolbar><Grip $side /><Tools items={snapTools} side /></SideToolbar>
        </RightDock>
      </Workspace>

      <CommandDock>
        <CommandRow>
          <CommandGrip />
          <CommandBox>Команда:<CommandInput /></CommandBox>
        </CommandRow>
      </CommandDock>

      <StatusBar>
        <Coordinates>{"57.8319,  376.5873, 0.0000"}</Coordinates>
        {toggles.map(([text, width, on]) => (
          <Toggle key={text} $width={width} $on={on} aria-pressed={on}>{text}</Toggle>
        ))}
        <Spring />
        <Tray>
          <Icon name="satellite" />
          <Icon name="lock" />
        </Tray>
        <TrayArrow aria-label="Меню строки состояния">
          <svg width="7" height="4"><path d="M0 0h7L3.5 4z" /></svg>
        </TrayArrow>
      </StatusBar>

      <TaskEdge>
        <StartEdge />
        <TaskButtonEdge $shade="#9a9ba4" $width={157} />
        <TaskButtonEdge $shade="#6b6c7c" $width={157} />
        <TaskButtonEdge $shade="#9a9ba4" $width={157} />
        <TaskButtonEdge $shade="#c9cbe0" $width={438} />
      </TaskEdge>
    </Window>
  );
}
